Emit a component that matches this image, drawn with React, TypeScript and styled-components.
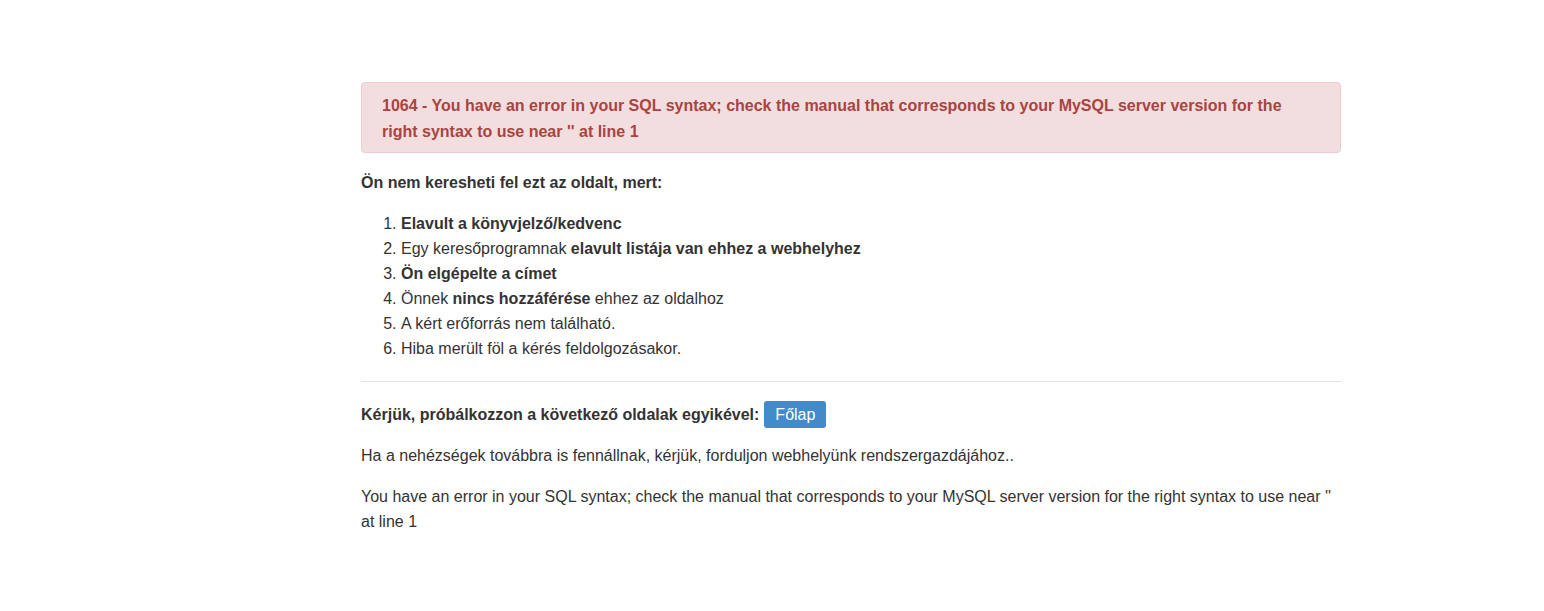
import React from 'react';
import styled, { createGlobalStyle } from 'styled-components';

const GlobalStyle = createGlobalStyle`
    body {
        margin: 0;
        background: #fff;
        font-family: "Liberation Sans", Arial, sans-serif;
        font-size: 16px;
        line-height: 25px;
        color: #333;
    }
`;

const reasons: React.ReactNode[] = [
    <b>Elavult a könyvjelző/kedvenc</b>,
    <>Egy keresőprogramnak <b>elavult listája van ehhez a webhelyhez</b></>,
    <b>Ön elgépelte a címet</b>,
    <>Önnek <b>nincs hozzáférése</b> ehhez az oldalhoz</>,
    <>A kért erőforrás nem található.</>,
    <>Hiba merült föl a kérés feldolgozásakor.</>,
];

const App = () => (
    <>
        <GlobalStyle/>
        <Page>
            <Alert>
                1064 - You have an error in your SQL syntax; check the manual that corresponds to your MySQL server version for the right syntax to use near '' at line 1
            </Alert>
            <Lead>Ön nem keresheti fel ezt az oldalt, mert:</Lead>
            <Reasons>
                {reasons.map((r, i) => <li key={i}>{r}</li>)}
            </Reasons>
            <Divider/>
            <TryLine>
                <b>Kérjük, próbálkozzon a következő oldalak egyikével:</b>
                <HomeButton href='#'>Főlap</HomeButton>
            </TryLine>
            <Para>Ha a nehézségek továbbra is fennállnak, kérjük, forduljon webhelyünk rendszergazdájához..</Para>
            <Para>You have an error in your SQL syntax; check the manual that corresponds to your MySQL server version for the right syntax to use near '' at line 1</Para>
        </Page>
    </>
);

const Page = styled.div`
    width: 980px;
    margin-left: 361px;
    padding-top: 82px;
`;

const Alert = styled.div`
    padding: 10px 20px 7px;
    background: #f2dede;
    border: 1px solid #ebccd1;
    border-radius: 4px;
    color: #a94442;
    font-weight: bold;
    line-height: 26px;
`;

const Lead = styled.p`
    margin: 17px 0 16px;
    font-weight: bold;
`;

const Reasons = styled.ol`
    margin: 0 0 20px;
    padding-left: 40px;
`;

const Divider = styled.hr`
    margin: 0 0 19px;
    border: 0;
    border-top: 1px solid #e3e3e3;
`;

const TryLine = styled.div`
    display: flex;
    align-items: center;
    gap: 5px;
    margin-bottom: 15px;
`;

const HomeButton = styled.a`
    display: inline-block;
    height: 27px;
    line-height: 27px;
    padding: 0 11px;
    background: #428bca;
    color: #fff;
    border-radius: 3px;
    text-decoration: none;
`;

const Para = styled.p`
    margin: 0 0 16px;
`;

export default App;
